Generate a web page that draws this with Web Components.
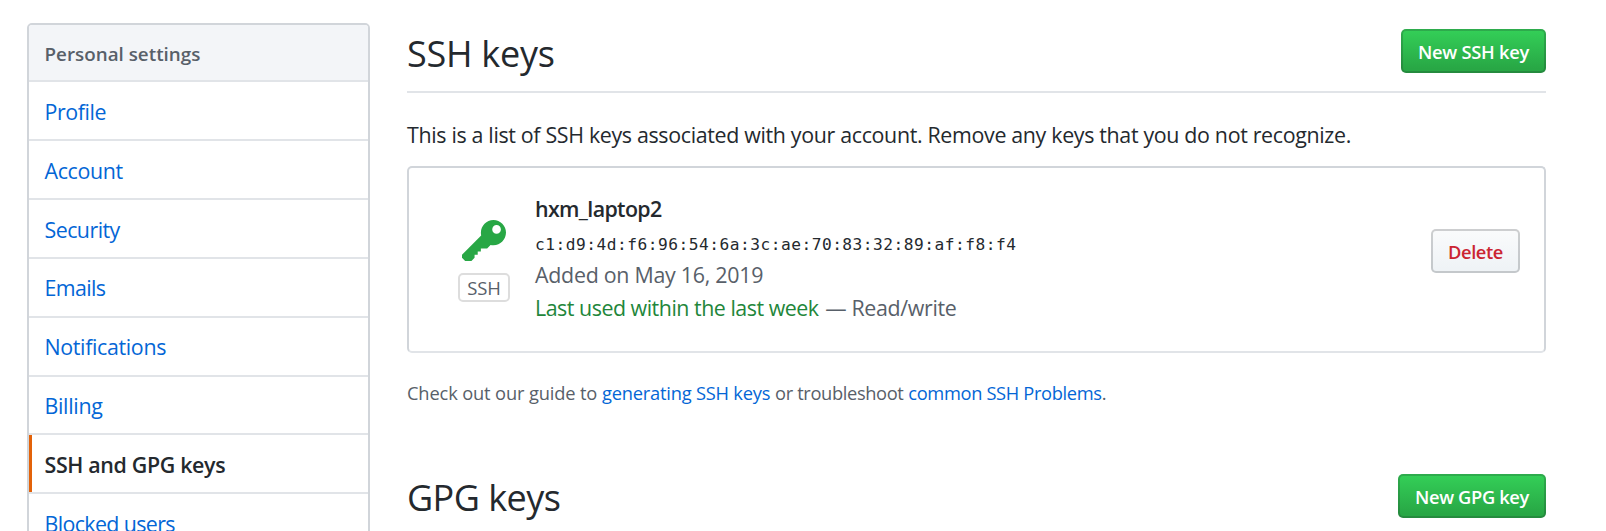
<!DOCTYPE html>
<html lang="en">
<head>
<meta charset="utf-8">
<title>SSH and GPG keys</title>
<style>
html,body{margin:0;background:#fff}
body{height:531px;overflow:hidden;font-family:"Open Sans","Noto Sans",sans-serif;font-size:21.4px;line-height:33px;color:#24292e}
</style>
</head>
<body>
<settings-page>
  <side-menu slot="side" heading="Personal settings">
    <menu-item style="letter-spacing:-.4px">Profile</menu-item>
    <menu-item style="letter-spacing:-.36px">Account</menu-item>
    <menu-item style="letter-spacing:-.54px">Security</menu-item>
    <menu-item style="letter-spacing:-.63px;--line:57px">Emails</menu-item>
    <menu-item style="letter-spacing:-.34px;--line:57px">Notifications</menu-item>
    <menu-item style="letter-spacing:-.3px;--row:56px;--line:57px">Billing</menu-item>
    <menu-item selected style="letter-spacing:-.34px">SSH and GPG keys</menu-item>
    <menu-item style="letter-spacing:-.62px">Blocked users</menu-item>
  </side-menu>
  <section-head style="letter-spacing:-.26px">SSH keys
    <action-button slot="action" kind="primary" style="width:145px;letter-spacing:-.25px">New SSH key</action-button>
  </section-head>
  <page-text class="intro">This is a list of SSH keys associated with your account. Remove any keys that you do not recognize.</page-text>
  <key-card kind="SSH">
    <span slot="name">hxm_laptop2</span>
    <span slot="print">c1:d9:4d:f6:96:54:6a:3c:ae:70:83:32:89:af:f8:f4</span>
    <span slot="added">Added on May 16, 2019</span>
    <span slot="used">Last used within the last week</span>
    <span slot="access">— Read/write</span>
    <action-button slot="action" kind="danger" style="width:89px;letter-spacing:-.42px">Delete</action-button>
  </key-card>
  <help-line></help-line>
  <section-head class="second" style="letter-spacing:-.55px">GPG keys
    <action-button slot="action" kind="primary" style="width:148px;letter-spacing:-.35px">New GPG key</action-button>
  </section-head>
</settings-page>
<script>
function define(name, html){
  const t = document.createElement('template');
  t.innerHTML = html;
  customElements.define(name, class extends HTMLElement{
    connectedCallback(){
      if(this.shadowRoot) return;
      const root = this.attachShadow({mode:'open'});
      root.append(t.content.cloneNode(true));
      root.querySelectorAll('[data-attr]').forEach(n => n.textContent = this.getAttribute(n.dataset.attr));
    }
  });
}

define('settings-page', `<style>
:host{display:flex;align-items:flex-start;padding:23px 60px 0 27px;gap:37px;box-sizing:border-box;width:1606px}
main{flex:1;min-width:0;padding-top:6px}
</style><slot name="side"></slot><main><slot></slot></main>`);

define('side-menu', `<style>
:host{display:block;box-sizing:border-box;width:343px;flex:none;border:2px solid #d1d5da;border-radius:5px;overflow:hidden}
header{box-sizing:border-box;height:57px;padding:2px 0 0 15.5px;line-height:55px;border-bottom:2px solid #e1e4e8;background:#f3f5f8;color:#586069;font-size:18.8px;font-weight:600;letter-spacing:.02px}
</style><header data-attr="heading"></header><slot></slot>`);

define('menu-item', `<style>
:host{display:block;border-bottom:2px solid #e1e4e8;color:#0366d6}
a{display:block;box-sizing:border-box;height:var(--row,57px);line-height:var(--line,59px);padding-left:15.5px}
:host([selected]) a{color:#24292e;font-weight:600;border-left:3px solid #e36209;padding-left:12.5px}
</style><a><slot></slot></a>`);

define('section-head', `<style>
:host{display:flex;justify-content:space-between;align-items:flex-start;box-sizing:border-box;height:64px;border-bottom:2px solid #e1e4e8}
:host(.second){margin-top:66px}
h2{margin:0;font-size:36px;font-weight:400;line-height:49px}
:host(.second) h2{line-height:48px}
</style><h2><slot></slot></h2><slot name="action"></slot>`);

define('action-button', `<style>
:host{display:block;flex:none}
button{display:block;box-sizing:border-box;width:100%;height:44px;padding:1px 0 0;font:600 18.3px/39px "Open Sans","Noto Sans",sans-serif;letter-spacing:inherit;text-align:center;border:2px solid rgba(27,31,35,.2);border-radius:5px;background-origin:border-box}
:host([kind=primary]) button{color:#fff;background-color:#28a745;background-image:linear-gradient(#34d058,#28a745 90%)}
:host([kind=danger]) button{color:#cb2431;background-color:#eff3f6;background-image:linear-gradient(#fafbfc,#eff3f6 90%)}
</style><button><slot></slot></button>`);

define('page-text', `<style>
:host{display:block;margin:25px 0 15px;white-space:nowrap;letter-spacing:-.333px}
</style><slot></slot>`);

define('key-card', `<style>
:host{display:flex;box-sizing:border-box;height:187px;border:2px solid #d1d5da;border-bottom-color:#e1e4e8;border-radius:5px;padding:24px 24px 0 49px}
.type{width:52px;padding-top:28px;margin-right:25px}
svg{display:block;width:44px;height:41px;margin:0 0 12px 4px;fill:#28a745}
.tag{box-sizing:border-box;height:29px;border:2px solid #ddd;border-radius:5px;text-align:center;font-size:18.5px;line-height:25px;letter-spacing:-.14px;color:#586069}
.info{flex:1;white-space:nowrap;color:#586069}
.name{font-weight:600;letter-spacing:-.64px;color:#24292e}
.print{box-sizing:border-box;height:33px;padding-top:3px;font-family:"DejaVu Sans Mono","Liberation Mono",monospace;font-size:16.2px;letter-spacing:.5px;color:#24292e}
.added{letter-spacing:-.27px}
.used{letter-spacing:-.48px;color:#22863a}
.access{letter-spacing:-.33px;margin-left:1px}
.act{padding-top:37px}
</style>
<div class="type"><svg viewBox="0 1 14 13" preserveAspectRatio="none"><path d="M12.83 2.17C12.08 1.42 11.14 1.03 10 1c-1.13.03-2.08.42-2.83 1.17S6.04 3.86 6.01 5c0 .3.03.59.09.89L0 12v1l1 1h2l1-1v-1h1v-1h1v-1h2l1.09-1.11c.3.08.59.11.91.11 1.14-.03 2.08-.42 2.83-1.17S13.97 6.14 14 5c-.03-1.14-.42-2.08-1.17-2.83zM11 5.38c-.77 0-1.38-.61-1.38-1.38 0-.77.61-1.38 1.38-1.38.77 0 1.38.61 1.38 1.38 0 .77-.61 1.38-1.38 1.38z"/></svg><div class="tag" data-attr="kind"></div></div>
<div class="info"><div class="name"><slot name="name"></slot></div><div class="print"><slot name="print"></slot></div><div class="added"><slot name="added"></slot></div><div><span class="used"><slot name="used"></slot></span> <span class="access"><slot name="access"></slot></span></div></div>
<div class="act"><slot name="action"></slot></div>`);

define('help-line', `<style>
:host{display:block;margin-top:25px;font-size:18.3px;line-height:30px;color:#586069;white-space:nowrap}
a{color:#0366d6}
</style><span style="letter-spacing:-.15px">Check out our guide to</span> <a style="letter-spacing:-.21px">generating SSH keys</a> <span style="letter-spacing:-.36px">or troubleshoot</span> <a style="letter-spacing:-.35px">common SSH Problems</a>.`);
</script>
</body>
</html>
